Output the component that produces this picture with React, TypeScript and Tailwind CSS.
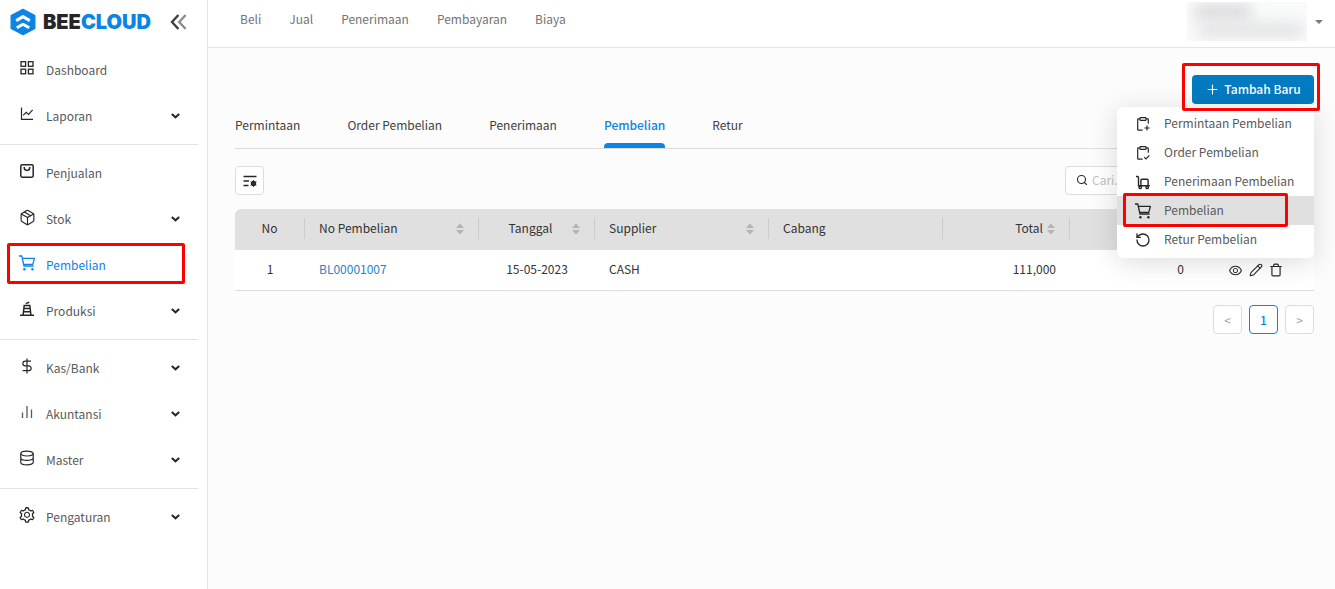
import React, { useState } from 'react';
import { Package, Search, RotateCcw, Pencil, Trash, Plus } from 'lucide-react';
import { AiOutlineEye, AiOutlineSetting } from 'react-icons/ai';

interface IconProps {
  className?: string;
}

interface NavItem {
  label: string;
  icon: React.ReactNode;
  expandable?: boolean;
  active?: boolean;
}

const GridIcon = () => (
  <svg width="16" height="16" viewBox="0 0 16 16" fill="none" stroke="currentColor" strokeWidth="1.3">
    <rect x="2" y="1.7" width="4.6" height="4.6" />
    <rect x="9.4" y="1.7" width="4.6" height="4.6" />
    <rect x="2" y="9.2" width="4.6" height="4.6" />
    <rect x="9.4" y="9.2" width="4.6" height="4.6" />
  </svg>
);

const LineChartIcon = () => (
  <svg width="16" height="16" viewBox="0 0 16 16" fill="none" stroke="currentColor" strokeWidth="1.2">
    <path d="M2.5 1.5v11.8H14" />
    <path d="m4.2 9.4 3-3 2.4 2 4-4.6" />
  </svg>
);

const BagIcon = () => (
  <svg width="16" height="16" viewBox="0 0 16 16" fill="none" stroke="currentColor" strokeWidth="1.5">
    <rect x="1.8" y="1.8" width="12.4" height="12.4" rx="1.4" />
    <path d="M5.2 4v.6a2.8 2.8 0 0 0 5.6 0V4" />
  </svg>
);

const CartIcon = ({ className }: IconProps) => (
  <svg className={className} width="18" height="18" viewBox="0 0 18 18" fill="none" stroke="currentColor" strokeWidth="1.3">
    <path d="M1.4 2h2.4l2.2 10h9.2M4.4 4.4h12l-1.6 6H5.7" strokeLinejoin="round" strokeLinecap="round" />
    <circle cx="6.4" cy="15.2" r="1.2" fill="currentColor" stroke="none" />
    <circle cx="14.4" cy="15.2" r="1.2" fill="currentColor" stroke="none" />
  </svg>
);

const FactoryIcon = () => (
  <svg width="16" height="16" viewBox="0 0 16 16" fill="none" stroke="currentColor" strokeWidth="1.5">
    <path d="M1 14.2h14M4.1 14 5.2 4.4h5.6L11.9 14M5 7.6h6M4.6 10.8h6.8" />
    <path d="M6.8 2.6c1-.2 2.2-.4 3.4-1.6" />
  </svg>
);

const DollarIcon = () => (
  <svg width="16" height="16" viewBox="0 0 16 16" fill="none" stroke="currentColor" strokeWidth="1.2">
    <path d="M8 .5v15M12 3.2H6.2a2.3 2.3 0 0 0 0 4.7h3.6a2.3 2.3 0 0 1 0 4.7H3.6" />
  </svg>
);

const BarsIcon = () => (
  <svg width="16" height="16" viewBox="0 0 16 16" fill="none" stroke="#595959" strokeWidth="1.3">
    <path d="M3.5 8.5V14M8 2v12M12.5 5.5V14" />
  </svg>
);

const DatabaseIcon = () => (
  <svg width="16" height="16" viewBox="0 0 16 16" fill="none" stroke="currentColor" strokeWidth="1.2">
    <ellipse cx="8" cy="3.6" rx="6.2" ry="2.4" />
    <path d="M1.8 3.6v8.8c0 1.3 2.8 2.4 6.2 2.4s6.2-1.1 6.2-2.4V3.6M1.8 8c0 1.3 2.8 2.4 6.2 2.4s6.2-1.1 6.2-2.4" />
  </svg>
);

const ChevronIcon = () => (
  <svg width="9" height="6" viewBox="0 0 9 6" fill="none" stroke="currentColor" strokeWidth="2">
    <path d="m.8 1 3.7 3.3L8.2 1" />
  </svg>
);

const ClipboardIcon = ({ mark }: { mark: string }) => (
  <svg width="16" height="16" viewBox="0 0 16 16" fill="none" stroke="currentColor" strokeWidth="1.2">
    <path d="M5 2.8H3.4a.7.7 0 0 0-.7.7v10c0 .4.3.7.7.7h4.2M11 2.8h1.6c.4 0 .7.3.7.7v4.3" />
    <rect x="5" y="1.6" width="6" height="2.8" rx=".6" />
    <path d={mark} />
  </svg>
);

const TrolleyIcon = () => (
  <svg width="16" height="16" viewBox="0 0 16 16" fill="none" stroke="currentColor" strokeWidth="1.4">
    <path d="M1 2.5h1.6c.6 0 .9.4.9.9v8.3h11.3" />
    <path d="M5.9 11.5V6.3c0-.6.4-1 1-1h5.2c.6 0 1 .4 1 1v5.2" />
    <circle cx="5.2" cy="13.4" r="1.2" />
    <circle cx="12.2" cy="13.4" r="1.2" />
  </svg>
);

const SortIcon = () => (
  <svg width="8" height="12" viewBox="0 0 8 12" fill="#b4b4b4">
    <path d="M4 0.5 8 5H0zM4 11.5 0 7h8z" />
  </svg>
);

const ColumnsIcon = () => (
  <svg width="16" height="16" viewBox="0 0 16 16" fill="none" stroke="currentColor" strokeWidth="1.3">
    <path d="M1.5 3.5h13M1.5 8h5.5M1.5 12.5h5" />
    <circle cx="11.5" cy="10.5" r="1.8" strokeWidth="1.8" />
    <path d="M11.5 7.2v6.6M8.6 8.8l5.8 3.4M8.6 12.2l5.8-3.4" strokeWidth="1" />
  </svg>
);

const navGroups: NavItem[][] = [
  [
    { label: 'Dashboard', icon: <GridIcon /> },
    { label: 'Laporan', icon: <LineChartIcon />, expandable: true },
  ],
  [
    { label: 'Penjualan', icon: <BagIcon /> },
    { label: 'Stok', icon: <Package size={17} strokeWidth={1.6} />, expandable: true },
    { label: 'Pembelian', icon: <CartIcon />, active: true },
    { label: 'Produksi', icon: <FactoryIcon />, expandable: true },
  ],
  [
    { label: 'Kas/Bank', icon: <DollarIcon />, expandable: true },
    { label: 'Akuntansi', icon: <BarsIcon />, expandable: true },
    { label: 'Master', icon: <DatabaseIcon />, expandable: true },
  ],
  [{ label: 'Pengaturan', icon: <AiOutlineSetting size={18} />, expandable: true }],
];

const topLinks = ['Beli', 'Jual', 'Penerimaan', 'Pembayaran', 'Biaya'];

const tabs = ['Permintaan', 'Order Pembelian', 'Penerimaan', 'Pembelian', 'Retur'];

const menuItems: NavItem[] = [
  { label: 'Permintaan Pembelian', icon: <ClipboardIcon mark="M9.4 12h5.2M12 9.4v5.2" /> },
  { label: 'Order Pembelian', icon: <ClipboardIcon mark="m9.2 12.2 1.8 1.8 3.4-3.6" /> },
  { label: 'Penerimaan Pembelian', icon: <TrolleyIcon /> },
  { label: 'Pembelian', icon: <CartIcon />, active: true },
  { label: 'Retur Pembelian', icon: <RotateCcw size={16} strokeWidth={2} /> },
];

function Highlight({ className }: IconProps) {
  return <span className={`pointer-events-none absolute rounded-xs border-3 border-[#ff0000] ${className}`} />;
}

function Logo() {
  return (
    <a href="#" className="flex items-center gap-[7px]">
      <svg width="26" height="28" viewBox="0 0 26 28">
        <path d="M13 1.4 24.8 7.6v12.8L13 26.6 1.2 20.4V7.6z" fill="#0c84e4" stroke="#0c84e4" strokeWidth="1.4" strokeLinejoin="round" />
        <path d="M6.2 12.6 13 8.6l6.8 4M6.8 19.8 13 16.2l6.2 3.6" fill="none" stroke="#fff" strokeWidth="3" strokeLinejoin="round" />
      </svg>
      <span className="font-[Inter,sans-serif] text-xl leading-7 font-black text-[#262626]">
        BEE<span className="text-[#0c84e4]">CLOUD</span>
      </span>
    </a>
  );
}

function Sidebar() {
  return (
    <aside className="w-52 shrink-0 border-r border-[#e4e4e4] bg-white">
      <div className="flex h-[47px] items-start justify-between pt-2 pr-5 pl-2.5">
        <Logo />
        <button aria-label="Tutup menu" className="mt-1.5">
          <svg width="17" height="16" viewBox="0 0 17 16" fill="none" strokeWidth="2.4">
            <path d="M8.4 1 2 8l6.4 7" stroke="#404040" />
            <path d="M15.6 1 9.2 8l6.4 7" stroke="#8c8c8c" />
          </svg>
        </button>
      </div>
      <nav>
        {navGroups.map((group, index) => (
          <div key={index}>
            {index > 0 && <hr className="my-[5px] mr-[9px] border-[#e2e2e2]" />}
            {group.map((item) => (
              <a
                key={item.label}
                href="#"
                className={`relative flex h-[46px] items-center pr-[27px] pl-[18px] ${
                  item.active ? 'text-[#0c84e4]' : 'text-[#262626]'
                }`}
              >
                <span className="mb-1 flex w-[18px] justify-center">{item.icon}</span>
                <span className={`ml-2.5 grow ${item.active ? '' : 'text-[#595959]'}`}>{item.label}</span>
                {item.expandable && <ChevronIcon />}
                {item.active && <Highlight className="top-px right-[22px] bottom-1 left-[7px]" />}
              </a>
            ))}
          </div>
        ))}
      </nav>
    </aside>
  );
}

function TopBar() {
  return (
    <header className="flex h-12 items-start justify-between border-b border-[#e4e4e4] bg-white pr-3 pl-8">
      <nav className="flex gap-7 pt-2.5 text-[#737373]">
        {topLinks.map((link) => (
          <a key={link} href="#">
            {link}
          </a>
        ))}
      </nav>
      <button aria-label="Akun" className="flex items-center gap-2 pt-0.5">
        <span className="flex h-[39px] w-[120px] flex-col gap-1.5 overflow-hidden bg-[#f9fafa] pt-1">
          <span className="ml-2 h-3 w-14 bg-[#d4d4d5] blur-[7px]" />
          <span className="ml-3 h-3 w-26 bg-[#dedfe1] blur-[7px]" />
        </span>
        <svg width="8" height="4" viewBox="0 0 8 4" fill="#7a7a7a">
          <path d="M0 0h8L4 4z" />
        </svg>
      </button>
    </header>
  );
}

function CreateMenu() {
  const [open, setOpen] = useState(true);

  return (
    <div className="relative z-10">
      <button
        onClick={() => setOpen(!open)}
        className="flex h-[29px] w-[122px] items-center justify-center gap-1 rounded bg-[#047bc1] pb-px font-medium text-white"
      >
        <Plus size={15} strokeWidth={1.8} />
        Tambah Baru
      </button>
      {open && (
        <div className="absolute top-8 right-0 w-[197px] rounded-md bg-white pt-0.5 pb-1 shadow-[0_4px_28px_rgba(0,0,0,0.14)]">
          {menuItems.map((item) => (
            <button
              key={item.label}
              className={`relative flex h-[29px] w-full items-center gap-3 pl-[17px] text-left whitespace-nowrap text-[#262626] ${
                item.active ? 'bg-[#e0e0e0]' : ''
              }`}
            >
              <span className="flex w-[18px] justify-center">{item.icon}</span>
              <span className="pb-px text-[#595959]">{item.label}</span>
              {item.active && <Highlight className="-top-[3px] right-[26px] -bottom-0.5 left-1.5" />}
            </button>
          ))}
        </div>
      )}
      <Highlight className="-top-3 -right-1.5 -left-2.5 h-12" />
    </div>
  );
}

interface HeadCellProps {
  label?: string;
  align?: string;
  sortable?: boolean;
  last?: boolean;
}

function HeadCell({ label, align = 'text-left', sortable, last }: HeadCellProps) {
  return (
    <th className="h-[41px] p-0 pb-0.5 font-normal">
      <div className={`flex h-[21px] items-center gap-1 px-3.5 ${last ? '' : 'border-r border-[#cccccc]'}`}>
        <span className={`grow pb-px ${align}`}>{label}</span>
        {sortable && <SortIcon />}
      </div>
    </th>
  );
}

function PurchaseTable() {
  return (
    <table className="mt-3.5 w-full table-fixed border-separate border-spacing-0 text-[#333333]">
      <colgroup>
        <col className="w-[70px]" />
        <col className="w-[174px]" />
        <col className="w-[116px]" />
        <col className="w-[174px]" />
        <col />
        <col className="w-[127px]" />
        <col className="w-32" />
        <col className="w-[116px]" />
      </colgroup>
      <thead>
        <tr className="bg-[#e0e0e0] [&>th]:first:rounded-tl-md">
          <HeadCell label="No" align="text-center" />
          <HeadCell label="No Pembelian" sortable />
          <HeadCell label="Tanggal" align="text-center" sortable />
          <HeadCell label="Supplier" sortable />
          <HeadCell label="Cabang" />
          <HeadCell label="Total" align="text-right" sortable />
          <HeadCell />
          <HeadCell last />
        </tr>
      </thead>
      <tbody>
        <tr className="bg-white [&>td]:h-[41px] [&>td]:border-b [&>td]:border-[#dcdcdc] [&>td]:px-3.5 [&>td]:pt-0 [&>td]:pb-0.5">
          <td className="text-center">1</td>
          <td>
            <a href="#" className="text-[#2484c6]">
              BL00001007
            </a>
          </td>
          <td className="text-center">15-05-2023</td>
          <td>CASH</td>
          <td />
          <td className="text-right">111,000</td>
          <td className="text-right">0</td>
          <td>
            <div className="flex items-center justify-center gap-1.5 pt-0.5 pr-0.5 text-[#262626]">
              <button aria-label="Lihat">
                <AiOutlineEye size={15} />
              </button>
              <button aria-label="Ubah">
                <Pencil size={14} strokeWidth={1.8} />
              </button>
              <button aria-label="Hapus">
                <Trash size={14} strokeWidth={2} />
              </button>
            </div>
          </td>
        </tr>
      </tbody>
    </table>
  );
}

export default function App() {
  return (
    <div className="flex min-h-screen bg-[#fcfcfc] font-['Noto_Sans_CJK_SC',sans-serif] text-xs leading-[18px]">
      <Sidebar />
      <div className="min-w-0 grow">
        <TopBar />
        <main className="pt-[27px] pr-[21px] pl-[27px]">
          <div className="flex justify-end">
            <CreateMenu />
          </div>

          <nav className="mt-3 flex h-[33px] gap-[47px] border-b border-[#dcdcdc] text-[#404040]">
            {tabs.map((tab) => (
              <a
                key={tab}
                href="#"
                className={tab === 'Pembelian' ? 'flex flex-col justify-between font-medium text-[#0c84e4]' : ''}
              >
                {tab}
                {tab === 'Pembelian' && <span className="h-[5px] rounded-t-sm bg-[#0c84e4]" />}
              </a>
            ))}
          </nav>

          <div className="mt-[17px] flex justify-between">
            <button
              aria-label="Atur kolom"
              className="flex size-[29px] items-center justify-center rounded border border-[#dcdcdc] bg-white text-[#262626]"
            >
              <ColumnsIcon />
            </button>
            <label className="flex h-[29px] w-[249px] items-center gap-1 rounded border border-[#dcdcdc] bg-white pb-px pl-2.5 text-[#262626]">
              <Search size={12} strokeWidth={2.2} />
              <input
                type="text"
                aria-label="Cari"
                placeholder="Cari..."
                className="min-w-0 grow bg-transparent outline-none placeholder:text-[#bfbfbf]"
              />
            </label>
          </div>

          <PurchaseTable />

          <div className="mt-3.5 flex justify-end gap-[7px] [&>button]:size-[29px] [&>button]:rounded [&>button]:border [&>button]:bg-white">
            <button aria-label="Sebelumnya" className="border-[#dcdcdc] text-[#a3a3a3]">
              &lt;
            </button>
            <button className="border-[#0c84e4] font-medium text-[#0c84e4]">1</button>
            <button aria-label="Berikutnya" className="border-[#dcdcdc] text-[#a3a3a3]">
              &gt;
            </button>
          </div>
        </main>
      </div>
    </div>
  );
}
